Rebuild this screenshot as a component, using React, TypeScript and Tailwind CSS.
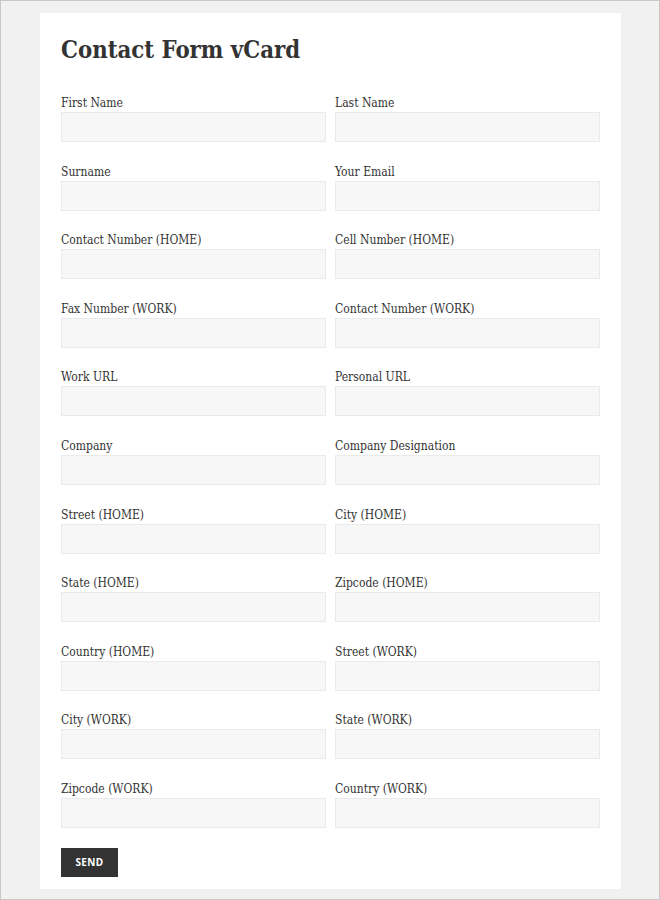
const FIELDS: [string, string][] = [
  ['First Name', 'Last Name'],
  ['Surname', 'Your Email'],
  ['Contact Number (HOME)', 'Cell Number (HOME)'],
  ['Fax Number (WORK)', 'Contact Number (WORK)'],
  ['Work URL', 'Personal URL'],
  ['Company', 'Company Designation'],
  ['Street (HOME)', 'City (HOME)'],
  ['State (HOME)', 'Zipcode (HOME)'],
  ['Country (HOME)', 'Street (WORK)'],
  ['City (WORK)', 'State (WORK)'],
  ['Zipcode (WORK)', 'Country (WORK)'],
]

function Field({ label }: { label: string }) {
  return (
    <label className="flex flex-col">
      <span className="text-[12px] leading-[16px] text-[#333333]">{label}</span>
      <input
        type="text"
        className="mt-[1px] h-[30px] w-full border border-[#eaeaea] bg-[#f7f7f7] px-2 outline-none"
      />
    </label>
  )
}

export default function App() {
  return (
    <div
      className="h-[900px] w-[660px] border border-[#c8c8c8] bg-[#f1f1f1] pl-[39px] pt-[12px] font-stretch-condensed"
      style={{ fontFamily: '"DejaVu Serif", "Liberation Serif", serif' }}
    >
      <div className="h-[876px] w-[581px] bg-white px-[21px] pt-[20px]">
        <h1 className="text-[23.7px] font-bold leading-[34px] text-[#333333]">Contact Form vCard</h1>

        <form className="mt-[28px] grid grid-cols-2 gap-x-[9px] gap-y-[21.6px]">
          {FIELDS.flat().map((f) => (
            <Field key={f} label={f} />
          ))}
        </form>

        <button
          type="button"
          className="mt-[20px] h-[29px] w-[57px] bg-[#333333] text-[10px] font-bold uppercase tracking-[0.04em] text-white font-stretch-normal"
          style={{ fontFamily: '"Noto Sans", sans-serif' }}
        >
          Send
        </button>
      </div>
    </div>
  )
}
